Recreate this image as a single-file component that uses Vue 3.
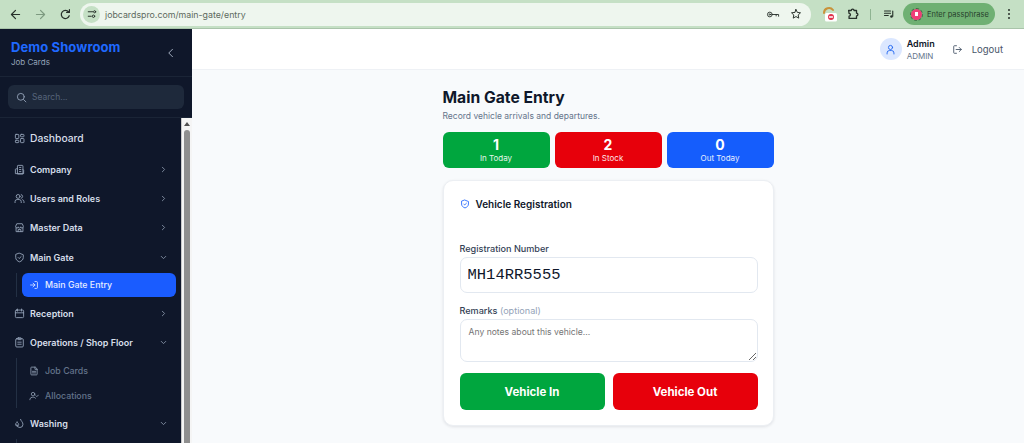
<template>
  <div class="page">
    <div class="browser-bar">
      <svg class="tb-icon back" viewBox="0 0 16 16"><path d="M13 8H3.5M8 3 3 8l5 5" /></svg>
      <svg class="tb-icon fwd" viewBox="0 0 16 16"><path d="M3 8h9.5M8 3l5 5-5 5" /></svg>
      <svg class="tb-icon reload" viewBox="0 0 16 16"><path d="M12.6 9.5a5 5 0 1 1-.8-4.6M12.8 2v3.4H9.4" /></svg>
      <div class="omnibox">
        <span class="site-chip">
          <svg viewBox="0 0 16 16"><path d="M3 5h6M3 11h4" /><circle cx="11.5" cy="5" r="1.4" /><circle cx="10" cy="11" r="1.6" /></svg>
        </span>
        <span class="url">jobcardspro.com/main-gate/entry</span>
        <svg class="omni-icon key" viewBox="0 0 20 16"><circle cx="5.5" cy="8" r="3.4" /><circle cx="5.5" cy="8" r="1" /><path d="M9 8h9v2.5M14.5 8v2" /></svg>
        <svg class="omni-icon star" viewBox="0 0 16 16"><path d="m8 2 1.8 3.9 4.2.5-3.1 2.9.8 4.2L8 11.4l-3.7 2.1.8-4.2L2 6.4l4.2-.5z" /></svg>
      </div>
      <span class="ext-icon">
        <svg viewBox="0 0 16 16"><path d="M2 7a5 5 0 0 1 9-3" fill="none" stroke="#c9923a" stroke-width="2" /><rect x="3" y="7" width="12" height="8.500" rx="1.500" fill="#fff" /><circle cx="9" cy="11" r="3" fill="#e0314a" /><path d="M7.500 11h3" stroke="#fff" /></svg>
      </span>
      <svg class="tb-icon puzzle" viewBox="0 0 16 16"><path d="M3 4h3a1.6 1.6 0 0 1 3.2 0H12v3a1.6 1.6 0 0 1 0 3.2V13H3.500v-2.500a1.6 1.6 0 0 0 0-3.200z" /></svg>
      <span class="tb-divider"></span>
      <svg class="tb-icon media" viewBox="0 0 16 16"><path d="M2 4h8M2 7h8M2 10h5M13 4v7" /><circle cx="11.300" cy="11.300" r="1.700" fill="#27302a" stroke="none" /></svg>
      <div class="passphrase">
        <span class="pass-dot"><i></i></span>
        <span>Enter passphrase</span>
      </div>
      <span class="kebab"><i></i><i></i><i></i></span>
    </div>

    <div class="app">
      <aside class="sidebar">
        <div class="brand">
          <div>
            <div class="brand-name">Demo Showroom</div>
            <div class="brand-sub">Job Cards</div>
          </div>
          <svg class="collapse" viewBox="0 0 16 16"><path d="m10 3-5 5 5 5" /></svg>
        </div>
        <div class="search-wrap">
          <div class="search">
            <svg viewBox="0 0 16 16"><circle cx="7" cy="7" r="5" /><path d="m11 11 3.400 3.400" /></svg>
            <span>Search...</span>
          </div>
        </div>
        <div class="nav-wrap">
          <nav class="nav">
            <div class="item dash">
              <svg viewBox="0 0 16 16"><rect x="2" y="2" width="5" height="6" rx="1" /><rect x="9.500" y="2" width="5" height="3.500" rx="1" /><rect x="9.500" y="8" width="5" height="6" rx="1" /><rect x="2" y="10.500" width="5" height="3.500" rx="1" /></svg>
              <span>Dashboard</span>
            </div>
            <div class="item">
              <svg viewBox="0 0 16 16"><path d="M5 14V3a1 1 0 0 1 1-1h6a1 1 0 0 1 1 1v11zM5 7H3a1 1 0 0 0-1 1v6h12V9a1 1 0 0 0-1-1M8 5h2M8 8h2M8 11h2" /></svg>
              <span>Company</span>
              <svg class="chev" viewBox="0 0 12 12"><path d="m4.500 3 3 3-3 3" /></svg>
            </div>
            <div class="item">
              <svg viewBox="0 0 16 16"><circle cx="6" cy="5" r="2.800" /><path d="M1.500 14v-1.500A3 3 0 0 1 4.500 9.500h3a3 3 0 0 1 3 3V14M10.500 2.300a2.800 2.800 0 0 1 0 5.400M12.500 9.700a3 3 0 0 1 2 2.800V14" /></svg>
              <span>Users and Roles</span>
              <svg class="chev" viewBox="0 0 12 12"><path d="m4.500 3 3 3-3 3" /></svg>
            </div>
            <div class="item">
              <svg viewBox="0 0 16 16"><path d="M2.500 6 4 2.500h8L13.500 6v1a1.800 1.800 0 0 1-3.700 0 1.800 1.800 0 0 1-3.700 0 1.800 1.800 0 0 1-3.600 0zM3 8.500V14h10V8.500M6 14v-3h4v3" /></svg>
              <span>Master Data</span>
              <svg class="chev" viewBox="0 0 12 12"><path d="m4.500 3 3 3-3 3" /></svg>
            </div>
            <div class="item open">
              <svg viewBox="0 0 16 16"><path d="M8 1.800 13.500 4v4c0 3.200-2.400 5.200-5.500 6.300C4.900 13.200 2.500 11.200 2.500 8V4zM6 8l1.500 1.500L10.300 6.800" /></svg>
              <span>Main Gate</span>
              <svg class="chev" viewBox="0 0 12 12"><path d="m3 4.500 3 3 3-3" /></svg>
            </div>
            <div class="sub-list gate">
              <div class="sub active">
                <svg viewBox="0 0 16 16"><path d="M9.500 2.500H12a1.500 1.500 0 0 1 1.500 1.500v8a1.500 1.500 0 0 1-1.500 1.500H9.500M6.500 5l3 3-3 3M9.500 8H2.500" /></svg>
                <span>Main Gate Entry</span>
              </div>
            </div>
            <div class="item">
              <svg viewBox="0 0 16 16"><rect x="2" y="3" width="12" height="11" rx="1.500" /><path d="M5 1.500v3M11 1.500v3M2 7h12" /></svg>
              <span>Reception</span>
              <svg class="chev" viewBox="0 0 12 12"><path d="m4.500 3 3 3-3 3" /></svg>
            </div>
            <div class="item open">
              <svg viewBox="0 0 16 16"><rect x="2.500" y="2.500" width="11" height="12" rx="1.500" /><rect x="5.500" y="1.200" width="5" height="2.600" rx=".6" /><path d="M5.500 7.500h5M5.500 10.500h5" /></svg>
              <span>Operations / Shop Floor</span>
              <svg class="chev" viewBox="0 0 12 12"><path d="m3 4.500 3 3 3-3" /></svg>
            </div>
            <div class="sub-list ops">
              <div class="sub">
                <svg viewBox="0 0 16 16"><path d="M9.500 1.800H4a1 1 0 0 0-1 1v10.400a1 1 0 0 0 1 1h8a1 1 0 0 0 1-1V5.300zM9.500 1.800v3.500H13M5.500 8.500h5M5.500 11h5" /></svg>
                <span>Job Cards</span>
              </div>
              <div class="sub">
                <svg viewBox="0 0 16 16"><circle cx="6.500" cy="5" r="2.800" /><path d="M1.500 14v-1a4 4 0 0 1 4-3h2a4 4 0 0 1 3 1.500M11 7.500l1.500 1.500L15 6.500" /></svg>
                <span>Allocations</span>
              </div>
            </div>
            <div class="item open">
              <svg viewBox="0 0 16 16"><path d="M9.500 2c.5 2.300 3.500 4 3.500 7.200a4.500 4.500 0 0 1-9 .3M4.500 6c.8 1.200 2.300 1.900 2.300 3.300a2.300 2.300 0 0 1-4.600 0C2.200 7.900 3.700 7.200 4.500 6z" /></svg>
              <span>Washing</span>
              <svg class="chev" viewBox="0 0 12 12"><path d="m3 4.500 3 3 3-3" /></svg>
            </div>
            <div class="sub-list tail"></div>
          </nav>
          <div class="scrollbar">
            <span class="arrow"></span>
            <span class="thumb"></span>
          </div>
        </div>
      </aside>

      <div class="main">
        <header class="topbar">
          <span class="avatar">
            <svg viewBox="0 0 16 16"><circle cx="8" cy="5" r="3" /><path d="M3 14.500v-1.500a3.500 3.500 0 0 1 3.500-3.500h3A3.500 3.500 0 0 1 13 13v1.500" /></svg>
          </span>
          <div class="who">
            <div class="who-name">Admin</div>
            <div class="who-role">ADMIN</div>
          </div>
          <div class="logout">
            <svg viewBox="0 0 16 16"><path d="M6.500 2.500H3.500a1 1 0 0 0-1 1v9a1 1 0 0 0 1 1h3M10.500 5l3 3-3 3M13.500 8H6" /></svg>
            <span>Logout</span>
          </div>
        </header>

        <main class="content">
          <div class="column">
            <h1>Main Gate Entry</h1>
            <p class="lead">Record vehicle arrivals and departures.</p>
            <div class="stats">
              <div v-for="s in stats" :key="s.label" class="stat" :class="s.tone">
                <strong>{{ s.value }}</strong>
                <span>{{ s.label }}</span>
              </div>
            </div>
            <section class="card">
              <div class="card-title">
                <svg viewBox="0 0 16 16"><path d="M8 1.800 13.500 4v4c0 3.200-2.400 5.200-5.500 6.300C4.900 13.200 2.500 11.200 2.500 8V4zM6 8l1.500 1.500L10.300 6.800" /></svg>
                <span>Vehicle Registration</span>
              </div>
              <label class="field-label first">Registration Number</label>
              <input class="reg-input" type="text" value="MH14RR5555" />
              <label class="field-label second">Remarks <em>(optional)</em></label>
              <textarea class="remarks" placeholder="Any notes about this vehicle..."></textarea>
              <div class="actions">
                <button class="btn green">Vehicle In</button>
                <button class="btn red">Vehicle Out</button>
              </div>
            </section>
          </div>
        </main>
      </div>
    </div>
  </div>
</template>

<script setup>
const stats = [
  { value: 1, label: 'In Today', tone: 'green' },
  { value: 2, label: 'In Stock', tone: 'red' },
  { value: 0, label: 'Out Today', tone: 'blue' }
];
</script>

<style>
html,
body {
  margin: 0;
  overflow: hidden;
}
</style>

<style scoped>
.page {
  width: 1024px;
  height: 443px;
  overflow: hidden;
  display: flex;
  flex-direction: column;
  font-family: Inter, "Liberation Sans", sans-serif;
}

svg {
  fill: none;
  stroke: currentColor;
  stroke-width: 1.3;
  stroke-linecap: round;
  stroke-linejoin: round;
  flex-shrink: 0;
}

/* browser toolbar */
.browser-bar {
  height: 28px;
  flex-shrink: 0;
  background: #c5e0c5;
  border-bottom: 1px solid #a9c4aa;
  display: flex;
  align-items: center;
  color: #27302a;
  box-sizing: content-box;
}

.tb-icon {
  width: 13px;
  height: 13px;
  stroke-width: 1.5;
}

.back {
  margin-left: 9px;
}

.fwd {
  margin-left: 12px;
  color: #7d9a80;
}

.reload {
  margin-left: 12px;
}

.omnibox {
  margin-left: 8px;
  width: 731px;
  height: 23px;
  border-radius: 12px;
  background: #eef6ee;
  display: flex;
  align-items: center;
  padding-left: 3px;
  box-sizing: border-box;
}

.site-chip {
  width: 17px;
  height: 17px;
  border-radius: 50%;
  background: #c5e0c5;
  display: flex;
  align-items: center;
  justify-content: center;
}

.site-chip svg {
  width: 12px;
  height: 12px;
}

.url {
  margin-left: 5px;
  font-size: 8.800px;
  color: #5d6a60;
  flex: 1;
}

.omni-icon {
  width: 13px;
  height: 13px;
}

.key {
  margin-right: 10px;
  width: 14px;
}

.star {
  margin-right: 9px;
  width: 12px;
  height: 12px;
}

.ext-icon {
  margin-left: 11px;
  width: 16px;
  height: 16px;
  display: flex;
}

.ext-icon svg {
  width: 16px;
  height: 16px;
  stroke: none;
}

.puzzle {
  margin-left: 8px;
  width: 14px;
  height: 14px;
}

.tb-divider {
  width: 1px;
  height: 11px;
  background: #8fb492;
  margin-left: 10px;
}

.media {
  margin-left: 12px;
  width: 12px;
  height: 12px;
}

.passphrase {
  margin-left: 8px;
  width: 92px;
  height: 22px;
  border-radius: 11px;
  background: #6fb073;
  display: flex;
  align-items: center;
  font-size: 7.500px;
  color: #27402c;
  box-sizing: border-box;
  padding-left: 8px;
  gap: 5px;
  white-space: nowrap;
}

.pass-dot {
  width: 11px;
  height: 11px;
  border-radius: 50%;
  background: #ee3f78;
  outline: 1px dashed #3d6b45;
  display: flex;
  align-items: center;
  justify-content: center;
}

.pass-dot i {
  width: 3px;
  height: 4px;
  background: #fff;
}

.kebab {
  margin-left: 13px;
  display: flex;
  flex-direction: column;
  gap: 2px;
}

.kebab i {
  width: 2px;
  height: 2px;
  border-radius: 50%;
  background: #27302a;
}

/* app shell */
.app {
  flex: 1;
  display: flex;
  min-height: 0;
}

.sidebar {
  width: 192px;
  flex-shrink: 0;
  background: #0f172a;
  display: flex;
  flex-direction: column;
  color: #e2e8f0;
}

.brand {
  height: 48px;
  flex-shrink: 0;
  padding: 11px 15px 0 11px;
  box-sizing: border-box;
  border-bottom: 1px solid #1a2436;
  display: flex;
  justify-content: space-between;
}

.brand-name {
  font-size: 13px;
  font-weight: 700;
  line-height: 15px;
  letter-spacing: 0.1px;
  color: #1f69ff;
}

.brand-sub {
  font-size: 8px;
  line-height: 12px;
  margin-top: 1px;
  color: #94a3b8;
}

.collapse {
  width: 12px;
  height: 12px;
  margin-top: 7px;
  color: #a3afc0;
}

.search-wrap {
  height: 41px;
  flex-shrink: 0;
  padding: 8px;
  box-sizing: border-box;
  border-bottom: 1px solid #1a2436;
}

.search {
  height: 24px;
  border-radius: 6px;
  background: #1e293b;
  display: flex;
  align-items: center;
  padding-left: 8px;
  gap: 5px;
  font-size: 8.500px;
  color: #56647a;
}

.search svg {
  width: 11px;
  height: 11px;
  color: #94a3b8;
}

.nav-wrap {
  flex: 1;
  display: flex;
  min-height: 0;
  overflow: hidden;
}

.nav {
  flex: 1;
  min-width: 0;
  padding-top: 5px;
}

.item {
  height: 29.300px;
  display: flex;
  align-items: center;
  padding: 0 13px 0 14px;
  gap: 5px;
  font-size: 9px;
  font-weight: 600;
  color: #d6dee9;
}

.item > svg:first-child {
  width: 11px;
  height: 11px;
  color: #94a3b8;
}

.item span {
  flex: 1;
  white-space: nowrap;
}

.dash {
  height: 30px;
  font-size: 10.300px;
  font-weight: 500;
  margin-bottom: 1.500px;
}

.chev {
  width: 9px;
  height: 9px;
  color: #7c899c;
}

.sub-list {
  margin-left: 16px;
  border-left: 1px solid #233044;
  padding-left: 5px;
}

.gate {
  height: 24px;
  padding-right: 5px;
  margin-top: 1px;
  margin-bottom: 2px;
}

.ops {
  height: 50px;
  margin-top: 1px;
  padding-right: 5px;
  margin-bottom: 1px;
}

.tail {
  height: 20px;
}

.sub {
  height: 25px;
  display: flex;
  align-items: center;
  padding-left: 7px;
  gap: 6px;
  font-size: 8.800px;
  font-weight: 500;
  color: #64748b;
}

.sub svg {
  width: 10px;
  height: 10px;
  color: #94a3b8;
}

.sub.active {
  height: 24px;
  border-radius: 6px;
  background: #1a5cff;
  color: #e6edff;
}

.sub.active svg {
  color: #e6edff;
}

.scrollbar {
  width: 11px;
  flex-shrink: 0;
  background: #f5f5f5;
  border-left: 1px solid #c8c8c8;
  box-sizing: border-box;
  display: flex;
  flex-direction: column;
  align-items: center;
}

.arrow {
  margin-top: 4px;
  width: 0;
  height: 0;
  border-left: 3px solid transparent;
  border-right: 3px solid transparent;
  border-bottom: 4px solid #505050;
}

.thumb {
  margin-top: 4px;
  width: 6px;
  flex: 1;
  background: #8f8f8f;
  border-radius: 3px 3px 0 0;
}

/* main area */
.main {
  flex: 1;
  min-width: 0;
  background: #f8fafc;
  display: flex;
  flex-direction: column;
}

.topbar {
  height: 41px;
  flex-shrink: 0;
  box-sizing: border-box;
  background: #fff;
  border-bottom: 1px solid #eef1f5;
  display: flex;
  align-items: center;
  justify-content: flex-end;
  padding-right: 21px;
}

.avatar {
  width: 22px;
  height: 22px;
  border-radius: 50%;
  background: #dbe7ff;
  color: #2166f0;
  display: flex;
  align-items: center;
  justify-content: center;
}

.avatar svg {
  width: 11px;
  height: 11px;
}

.who {
  margin-left: 5px;
  padding-top: 1px;
}

.who-name {
  font-size: 9px;
  line-height: 12px;
  font-weight: 600;
  color: #0f172a;
}

.who-role {
  font-size: 8px;
  line-height: 12px;
  color: #64748b;
}

.logout {
  margin-left: 17px;
  display: flex;
  align-items: center;
  gap: 9px;
  font-size: 9.500px;
  color: #475569;
}

.logout svg {
  width: 11px;
  height: 11px;
}

.content {
  flex: 1;
  display: flex;
  justify-content: center;
  min-height: 0;
}

.column {
  width: 331px;
  padding-top: 18px;
}

h1 {
  margin: 0;
  font-size: 15.700px;
  line-height: 20px;
  font-weight: 700;
  color: #0f172a;
}

.lead {
  margin: 1px 0 0;
  font-size: 8.500px;
  line-height: 14px;
  color: #64748b;
}

.stats {
  display: grid;
  grid-template-columns: repeat(3, 1fr);
  gap: 5px;
  margin-top: 9px;
}

.stat {
  height: 36px;
  border-radius: 6px;
  color: #fff;
  display: flex;
  flex-direction: column;
  align-items: center;
  justify-content: center;
}

.stat strong {
  font-size: 14px;
  line-height: 15px;
  font-weight: 700;
}

.stat span {
  font-size: 8px;
  line-height: 12px;
  opacity: 0.9;
}

.green {
  background: #00a63e;
}

.red {
  background: #e7000b;
}

.blue {
  background: #155dfc;
}

.card {
  margin-top: 12px;
  box-sizing: border-box;
  background: #fff;
  border: 1px solid #eceff3;
  border-radius: 10px;
  box-shadow: 0 1px 3px rgba(15, 23, 42, 0.1);
  padding: 16px 15px 15px 16px;
  display: flex;
  flex-direction: column;
}

.card-title {
  display: flex;
  align-items: center;
  gap: 6px;
  height: 14px;
  font-size: 10px;
  font-weight: 600;
  color: #0f172a;
}

.card-title svg {
  width: 10px;
  height: 10px;
  color: #155dfc;
}

.field-label {
  font-size: 9.100px;
  font-weight: 500;
  line-height: 13px;
  color: #334155;
}

.first {
  margin-top: 31px;
}

.second {
  margin-top: 11px;
}

.field-label em {
  font-style: normal;
  font-weight: 400;
  color: #94a3b8;
}

.reg-input {
  margin-top: 2px;
  height: 36px;
  box-sizing: border-box;
  border: 1px solid #e2e8f0;
  border-radius: 7px;
  padding: 0 7px;
  font-family: "Liberation Mono", monospace;
  font-size: 15.500px;
  color: #0f172a;
  background: #fff;
  outline: none;
}

.remarks {
  margin-top: 2px;
  height: 43px;
  box-sizing: border-box;
  border: 1px solid #e2e8f0;
  border-radius: 7px;
  padding: 7px 8px;
  font-family: Inter, "Liberation Sans", sans-serif;
  font-size: 8.600px;
  color: #0f172a;
  background: #fff;
  outline: none;
}

.remarks::placeholder {
  color: #757575;
}

.actions {
  margin-top: 11px;
  display: grid;
  grid-template-columns: 145px 145px;
  gap: 8px;
}

.btn {
  height: 37px;
  border: 0;
  border-radius: 6px;
  color: #fff;
  font-family: Inter, "Liberation Sans", sans-serif;
  font-size: 11.500px;
  font-weight: 700;
}
</style>
